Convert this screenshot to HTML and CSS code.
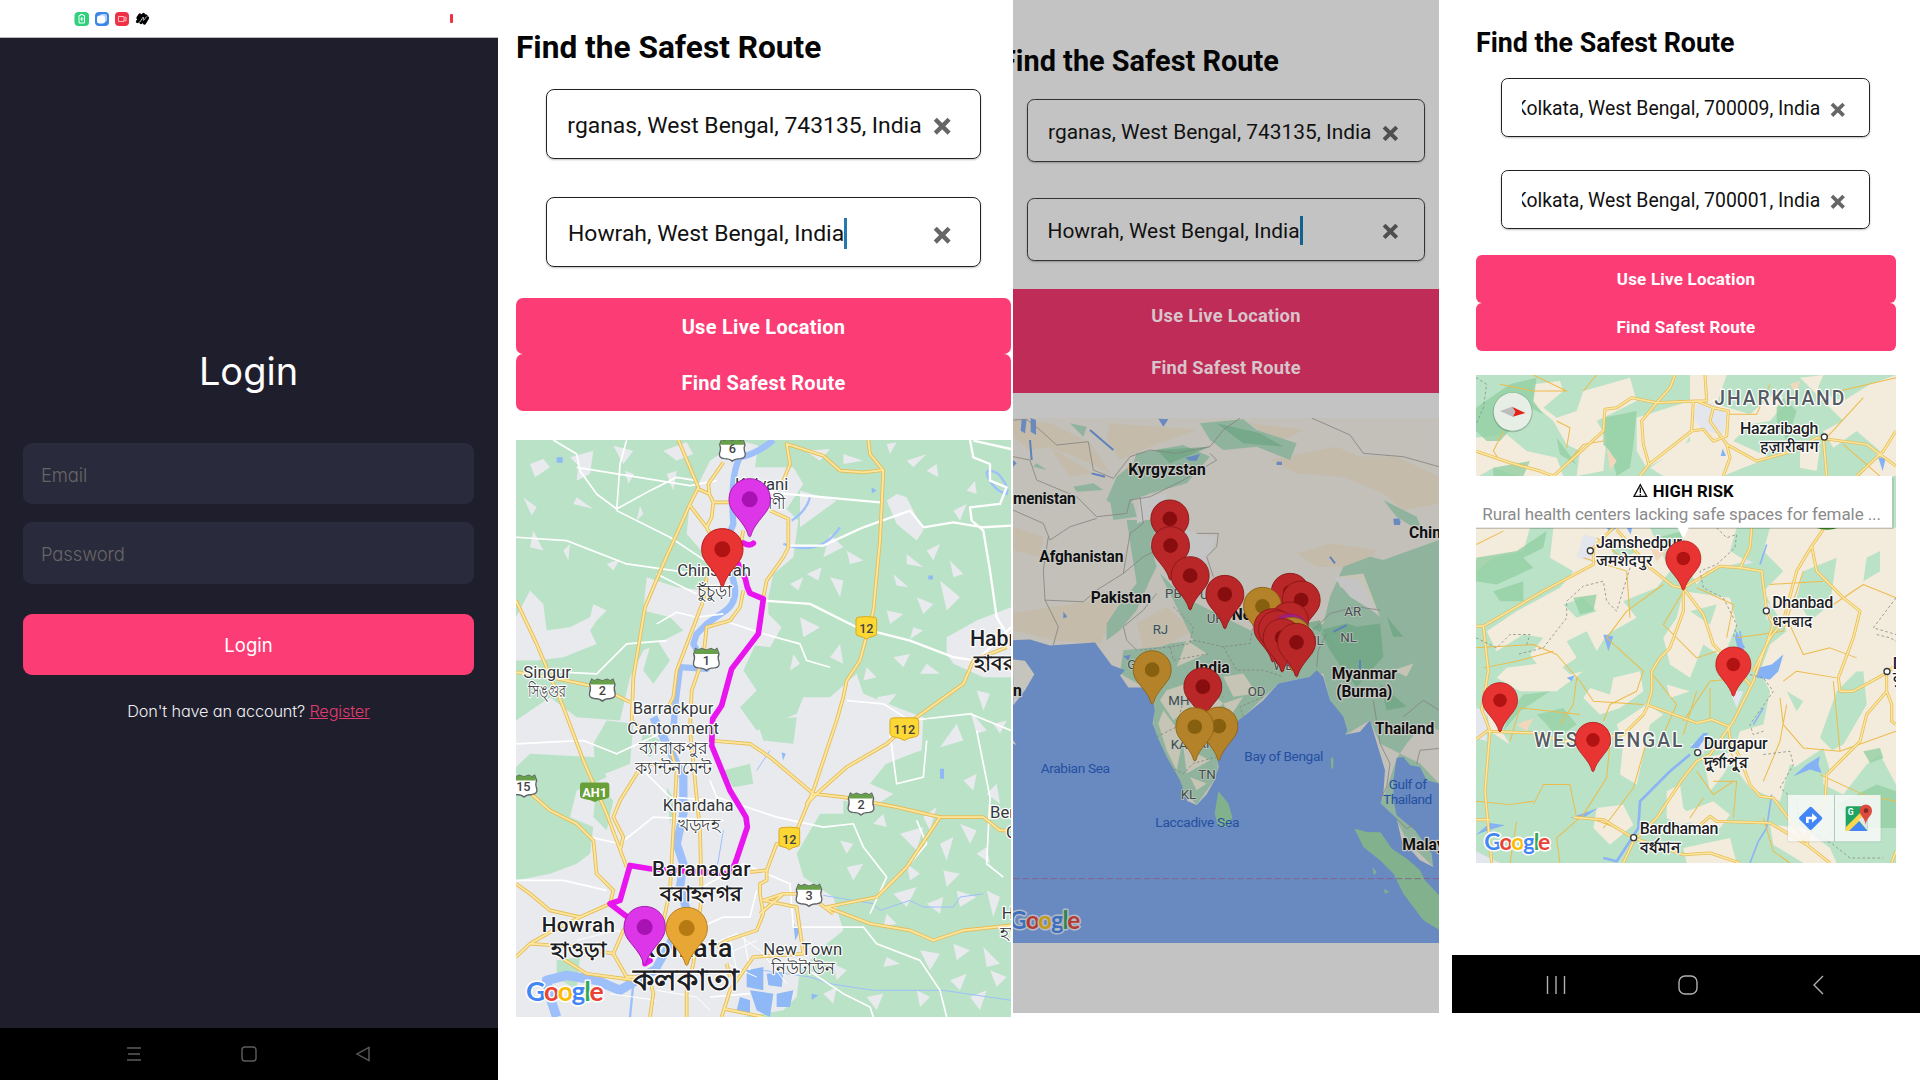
FILE: index.html
```html
<!DOCTYPE html>
<html lang="en">
<head>
<meta charset="utf-8">
<title>Safest Route</title>
<link rel="stylesheet" href="styles.css">
</head>
<body>
<svg class="defs" width="0" height="0" aria-hidden="true">
  <symbol id="pin" viewBox="-66 -66 132 182" overflow="visible">
    <path class="pin-body" d="M0-62C-35-62-62-35-62 0C-62 24-51 36-35 56C-18 77-8 92-4 109Q0 116 4 109C8 92 18 77 35 56C51 36 62 24 62 0C62-35 35-62 0-62Z"/>
    <circle class="pin-dot" r="24"/>
  </symbol>
  <symbol id="clear" viewBox="0 0 16 16"><path d="M2 2L14 14M14 2L2 14" stroke="currentColor" stroke-width="3.800" fill="none"/></symbol>
  <symbol id="shield" viewBox="-42 -36 84 72" overflow="visible">
    <path d="M-32-32L-24-27L-14-32L0-27L14-32L24-27L32-32L38-16Q33-5 38 8Q42 24 24 26Q8 26 0 34Q-8 26-24 26Q-42 24-38 8Q-33-5-38-16Z" fill="#fff" stroke="#5f6368" stroke-width="4"/>
    <path d="M-32-32L-24-27L-14-32L0-27L14-32L24-27L32-32L36-16H-36Z" fill="#689f4b"/>
  </symbol>
  <symbol id="plate" viewBox="-42 -36 84 72" overflow="visible">
    <path d="M-24-32Q0-36 24-32Q31-32 31-24V16Q31 24 20 25Q8 27 0 34Q-8 27-20 25Q-31 24-31 16V-24Q-31-32-24-32Z" fill="#fdd835" stroke="#d9a91c" stroke-width="3"/>
  </symbol>
</svg>

<main class="board">
  <section class="login">
    <header class="status">
      <svg class="status-apps" width="76" height="16" viewBox="0 0 76 16">
        <rect x="0.5" y="1" width="14.5" height="14" rx="4" fill="#2ed17c"/><path d="M5 4.500H6.500V3.500H9V4.500H10.500V12H5ZM7.800 6V10M6.200 8H9.300" fill="none" stroke="#fff"/>
        <rect x="21" y="1" width="14" height="14" rx="4" fill="#3c86ea"/><rect x="26" y="3" width="7" height="8" rx="2" fill="#b4d2fa"/><rect x="23" y="4.500" width="8" height="8" rx="2.500" fill="#fff"/>
        <rect x="41" y="1" width="14" height="14" rx="4" fill="#ef3148"/><path d="M44.500 5.500H50V10.500H44.500ZM50 7L52 6V10L50 9" fill="none" stroke="#ffb8be"/>
        <path d="M64 7L66 4M63.500 10.500L69.500 3.500M67 11.500L72 5M70.500 12L73.500 7" stroke="#000" stroke-width="3.300" stroke-linecap="round"/><path d="M66 11L69 6Q70.500 6 69 9Q69.500 10.500 72.500 5.500" fill="none" stroke="#fff" stroke-width=".7"/>
      </svg>
      <span class="battery"></span>
    </header>
    <form class="login-form">
      <h1>Login</h1>
      <div class="field">Email</div>
      <div class="field">Password</div>
      <div class="login-btn">Login</div>
      <p>Don't have an account? <a>Register</a></p>
    </form>
    <nav class="nav nav-dim">
      <svg width="16" height="16" viewBox="0 0 16 16"><path d="M1 2H15M2 8H14M1 14H15"/></svg>
      <svg width="16" height="16" viewBox="0 0 16 16"><rect x="1" y="1" width="14" height="14" rx="3"/></svg>
      <svg width="16" height="16" viewBox="0 0 16 16"><path d="M14 1.500V14.500L2 8Z"/></svg>
    </nav>
  </section>

  <section class="screen screen-route">
    <div class="content">
      <h2>Find the Safest Route</h2>
      <div class="input"><span class="value"><b>rganas, West Bengal, 743135, India</b></span><svg class="x"><use href="#clear"/></svg></div>
      <div class="input"><span class="value start"><b>Howrah, West Bengal, India</b><i class="caret"></i></span><svg class="x"><use href="#clear"/></svg></div>
      <div class="btn">Use Live Location</div>
      <div class="btn">Find Safest Route</div>
      <svg class="map" viewBox="18 28 1485 1732" preserveAspectRatio="none">
        <rect x="18" y="28" width="1485" height="1732" fill="#bae2c7"/>
        <g fill="#e8eaed">
          <path d="M600 90L690 28L745 45L735 110L850 110L880 160L830 235L865 270L850 380L790 430L775 500L775 550L815 590L780 650L735 645L700 720L740 780L690 830L740 900L860 850L880 800L960 800L1040 730L1060 790L1160 830L1240 860L1235 960L1140 985L1080 1060L1150 1090L1090 1130L1000 1110L1000 1150L930 1150L860 1270L880 1340L970 1400L1000 1500L950 1540L900 1590L870 1620L860 1700L820 1740L700 1760H18V1350L120 1330L200 1300L240 1270L250 1190L180 1160L200 1080L290 1040L260 980L60 970L18 1010V870L120 800L200 860L330 870L360 740L400 660L520 600L480 560L400 540L410 440L500 470L590 480L600 390L530 310L540 210Z"/>
          <path d="M1310 620L1400 570L1503 530V740L1420 740L1330 700L1310 670Z"/>
          <path d="M18 560L60 480L100 520L110 600L180 590L280 540L240 600L260 640L160 680L80 690L18 690ZM60 100L100 85L120 110L75 140ZM180 80L250 60L240 130L200 150L205 105ZM310 45L370 60L340 100ZM460 60L530 35L550 70L500 90ZM250 520L290 540L230 600ZM1130 210L1160 190L1190 200L1240 300L1220 330L1160 280ZM870 180L980 210L870 290ZM960 310L1000 350L940 380ZM840 880L960 800L1000 900L950 930ZM1030 970L1170 900L1230 960L1130 1000ZM1380 840L1430 900L1400 910ZM1290 950L1340 880L1360 930Z"/>
          <path d="M40 200L80 230L65 255ZM200 200L250 235L190 220ZM70 300L100 360L60 350ZM160 360L180 340L175 390ZM290 400L330 385L310 420ZM380 270L390 225L400 250ZM345 120L372 130L355 160ZM470 130L500 120L490 180ZM885 60L960 55L930 90ZM1000 70L1060 90L1000 100ZM1130 40L1160 35L1140 70ZM1190 90L1250 70L1210 110ZM1250 120L1280 100L1285 140ZM1330 240L1370 220L1350 270ZM1370 180L1395 150L1400 190ZM1250 360L1290 340L1270 390ZM1190 370L1240 410L1190 400ZM1150 430L1195 470L1160 465ZM1320 390L1360 430L1330 440ZM890 430L935 410L925 450ZM960 440L1000 450L990 500ZM840 460L880 440L865 480ZM1010 360L1060 390L1020 400ZM870 560L930 590L880 620ZM960 680L990 640L1000 700ZM850 670L870 700L840 720ZM1130 540L1180 550L1140 580ZM1220 500L1270 520L1240 550ZM1290 450L1350 500L1310 540ZM1210 590L1240 600L1200 625ZM1150 680L1200 670L1180 710ZM1250 700L1290 730L1230 730ZM1070 710L1100 740L1060 750ZM1400 780L1440 790L1420 840ZM1450 880L1490 870L1470 910ZM1100 800L1160 790L1120 840Z"/>
          <path d="M1170 1210L1240 1190L1220 1260ZM1290 1240L1330 1220L1310 1290ZM1350 1180L1400 1200L1380 1240ZM1400 1270L1430 1250L1440 1300ZM1300 1320L1350 1330L1310 1370ZM1190 1300L1230 1330L1200 1350ZM990 1230L1030 1240L1010 1270ZM1010 1310L1060 1300L1030 1350ZM1150 1390L1220 1370L1190 1430ZM1250 1420L1300 1400L1290 1450ZM1340 1380L1400 1400L1350 1430ZM1430 1380L1470 1400L1450 1460ZM1130 1450L1160 1480L1120 1490ZM1230 1560L1290 1570L1260 1620ZM1330 1540L1380 1560L1340 1590ZM1420 1550L1470 1600L1430 1610ZM1130 1580L1170 1600L1120 1610ZM1320 1650L1370 1630L1350 1680ZM1220 1680L1260 1700L1230 1730ZM1380 1700L1430 1680L1410 1740ZM1440 1620L1490 1640L1460 1670ZM1070 1700L1120 1690L1100 1740ZM970 1600L1010 1620L980 1650ZM940 1690L980 1670L970 1720ZM1240 1160L1280 1130L1260 1200ZM1090 1180L1120 1150L1130 1190ZM1360 1050L1400 1030L1390 1080ZM1430 1090L1460 1060L1470 1120Z"/>
        </g>
        <g fill="#bae2c7"><path d="M290 870L370 880L360 1000L260 1040L250 940ZM400 900L450 930L420 980L390 960ZM430 610L480 690L430 760L400 720ZM18 1180L110 1200L110 1320L30 1340ZM260 1060L310 1110L290 1200L250 1160ZM740 870L860 860L850 940L760 930ZM640 1020L720 1000L730 1060L670 1070ZM470 1070L500 1120L480 1180ZM140 1590L210 1580L200 1680L140 1640Z"/></g>
        <g fill="none" stroke="#9dc0fa" stroke-linejoin="round">
          <path d="M790 28Q740 70 690 80Q660 130 670 280Q640 340 675 470Q680 520 640 545L590 580L560 610L550 640L590 715L510 710L495 830L490 900" stroke-width="19"/>
          <path d="M430 860L470 940L520 1040L520 1150L500 1240L520 1300L510 1370L530 1440L480 1540L440 1610" stroke-width="25"/>
          <path d="M140 1760L120 1700L110 1650L170 1635L260 1650L330 1680L380 1650L450 1610" stroke-width="28"/>
          <path d="M370 1660L360 1760M845 270Q890 240 900 200M820 340Q930 380 990 290M1430 130Q1430 110 1465 130Q1500 170 1490 190Q1450 180 1430 130" stroke-width="7"/>
          <path d="M940 1395L1090 1420L1110 1440L1200 1410L1240 1430L1330 1430L1350 1400L1420 1390M760 1620L900 1640L960 1660L1090 1680L1300 1680L1503 1710M640 1200L620 1320M740 1020L780 960" stroke-width="3"/>
        </g>
        <path d="M710 1620L760 1610L760 1680L710 1670ZM770 1630L820 1625L815 1670L775 1665ZM720 1680L790 1690L780 1760L740 1740ZM800 1690L850 1680L840 1730L800 1730ZM690 1700L720 1710L720 1750L680 1740ZM140 80h18v16h-18zM1290 1015h12v30h-12zM850 1480l20 20-14 30zM1085 170l15 10-15 8zM1255 435h14v12h-14zM815 965l12 5-8 20zM905 1690l20 5-20 14z" fill="#8fb8f6"/>
        <g fill="none" stroke="#fff" stroke-width="5" stroke-linejoin="round">
          <path d="M130 28L200 70L210 120L260 190L320 235L420 180L500 140L560 150M200 110L540 165L620 150M320 240L330 100L350 28M18 320L170 330L350 400L560 430L640 400M320 240L480 320L600 400M440 430L560 490"/>
          <path d="M760 510L900 520L1040 590L1200 630L1330 680L1400 690L1503 590M840 345L940 345L1060 290L1200 240L1240 290L1330 275L1420 290L1503 285M780 185L1110 215M1380 28L1390 80L1440 100L1440 150L1490 170L1470 220L1380 230L1385 270L1420 300L1440 420L1460 560L1490 610M1503 55L1390 30" stroke-width="7"/>
          <path d="M18 940L120 935L220 930L320 970L470 900M640 570L760 610L870 640L890 690L960 710M440 580L500 545L560 560L640 550M60 720L260 730L350 640L470 630M1010 810L1120 820L1200 870L1380 850L1503 900M600 1050L620 1100L800 1160L940 1190L1030 1180L1060 1250L1130 1340L1080 1450M1140 910L1160 1060L1240 1040L1250 930M1220 1170L1250 1240L1200 1300M240 1220L330 1240L430 1160L640 1170M560 1380L700 1300L840 1360L850 1490L1060 1490L1100 1540L1230 1590L1290 1680L1310 1760M850 1590L1000 1690L1080 1730L1090 1760M18 1350L160 1350L290 1380M400 1020L480 1100L620 1110M550 1500L640 1460L720 1460L740 1380M600 1700L720 1690M1400 900L1440 1100L1430 1300L1480 1340"/>
          <path d="M610 1540L680 1510L750 1560L830 1660M630 1580L740 1530M650 1600L740 1640M660 1520L680 1620M700 1510L720 1620M440 1680L560 1700L600 1740M300 1690L440 1710M200 1530L320 1500L400 1530" stroke-width="3"/>
        </g>
        <g class="casing"><g id="roads-kolkata" fill="none" stroke-linejoin="round">
          <path d="M505 28L565 170L540 220L460 400L405 530L370 740L365 870L400 900M465 1000L400 1000L380 1030L330 1110L310 1160L340 1220L330 1260"/>
          <path d="M640 95L595 160L598 190L565 175M598 190L610 215L670 215M610 215L605 260L590 290L540 225M590 290L600 310"/>
          <path d="M820 150L840 100L830 40L940 75L990 120L1060 125L1120 118L1110 330L1090 540L1050 690L1010 750L1000 800L980 870L910 1080L840 1250L800 1240L770 1320L770 1350L750 1360L750 1390L760 1450L740 1500L650 1530L620 1550"/>
          <path d="M1075 28L1080 70L1120 120M780 240L835 265L835 350L820 380L770 450L760 500M700 480L690 530L660 570L590 590L580 680L545 780L540 900L570 1200L575 1400L550 1600L530 1680L530 1760"/>
          <path d="M580 510L550 590L500 720L490 800L470 840M590 440L580 510M700 300L680 400"/>
          <path d="M18 510L80 640L160 830L220 990L290 1150L350 1310M18 725L120 740L240 765L290 780L360 815"/>
          <path d="M1490 650L1390 690L1360 760L1220 860L1130 940L1010 1010L920 1090L890 1120L910 1090L780 980L720 940L600 930"/>
          <path d="M910 1090L1000 1100L1160 1130L1290 1160L1420 1160L1470 1200L1503 1200M1290 1160L1190 1310L1140 1360L1100 1400L950 1430L1080 1480L1200 1500L1270 1530L1360 1500L1503 1485M930 1420L970 1450"/>
          <path d="M18 1050L120 1140L200 1180L250 1230L260 1330L310 1380L300 1420L210 1460L120 1440L60 1390L18 1360M210 1460L130 1500L60 1540L18 1580M60 1540L200 1550L310 1570L350 1640L400 1640M310 1570L340 1500L370 1470"/>
          <path d="M450 1520L480 1380L490 1200L500 1020L480 950M420 1650L430 1690L420 1760M150 1580L230 1630L380 1650M650 1600L660 1640M635 1760L660 1680L730 1580L880 1570L860 1430L760 1410L820 1390L860 1390M720 1325L770 1320M750 1450L820 1390M640 1735L760 1760"/>
        </g></g>
        <use href="#roads-kolkata" class="core"/>
        <path d="M700 337Q720 348 730 338M685 400L706 445L712 470L720 488L760 505L745 610L665 715L635 825L608 865L605 945L660 1080L708 1160L712 1190L675 1300L655 1330L420 1315L360 1305L330 1410L300 1420L405 1500L405 1600L420 1590" fill="none" stroke="#e815ee" stroke-width="17" stroke-linejoin="round" stroke-linecap="round"/>
        <g class="lbl" font-size="50">
          <text x="675" y="177" textLength="160">Kalyani</text><text x="690" y="235" textLength="138" lengthAdjust="spacingAndGlyphs">কল্যাণী</text>
          <text x="502" y="436" textLength="221">Chinsurah</text><text x="560" y="498" textLength="106" lengthAdjust="spacingAndGlyphs">চুঁচুড়া</text>
          <text x="40" y="741" textLength="143">Singur</text><text x="53" y="798" textLength="115" lengthAdjust="spacingAndGlyphs">সিঙ্গুর</text>
          <text x="368" y="852" textLength="242">Barrackpur</text><text x="352" y="912" textLength="275">Cantonment</text>
          <text x="386" y="971" textLength="207" lengthAdjust="spacingAndGlyphs">ব্যারাকপুর</text><text x="375" y="1031" textLength="230" lengthAdjust="spacingAndGlyphs">ক্যান্টনমেন্ট</text>
          <text x="458" y="1142" textLength="213">Khardaha</text><text x="503" y="1201" textLength="127" lengthAdjust="spacingAndGlyphs">খড়দহ</text>
          <text x="760" y="1573" textLength="237">New Town</text><text x="783" y="1632" textLength="190" lengthAdjust="spacingAndGlyphs">নিউটাউন</text>
          <text x="1440" y="1163">Berachampa</text><text x="1488" y="1224">Channel</text><text x="1475" y="1467">Haroa</text><text x="1470" y="1526">হাড়োয়া</text>
        </g>
        <g class="lbl mid" font-size="62">
          <text x="1380" y="646" font-size="64">Habra</text><text class="bn" x="1392" y="717">হাবরা</text>
          <text x="426" y="1337" textLength="296">Baranagar</text><text class="bn" x="450" y="1411" textLength="248" lengthAdjust="spacingAndGlyphs">বরাহনগর</text>
          <text x="95" y="1506" textLength="220">Howrah</text><text class="bn" x="122" y="1580" textLength="166" lengthAdjust="spacingAndGlyphs">হাওড়া</text>
          <text x="385" y="1579" font-size="80" textLength="282">Kolkata</text><text class="bn" x="370" y="1678" font-size="86" textLength="314" lengthAdjust="spacingAndGlyphs">কলকাতা</text>
        </g>
        <g class="shields" font-size="38">
          <use href="#shield" x="625" y="50" width="84" height="72" transform="translate(0 -28)"/><text x="667" y="68">6</text>
          <use href="#shield" x="547" y="650" width="84" height="72"/><text x="589" y="702">1</text>
          <use href="#shield" x="235" y="742" width="84" height="72"/><text x="277" y="793">2</text>
          <use href="#shield" x="0" y="1030" width="84" height="72"/><text x="40" y="1082">15</text>
          <use href="#shield" x="1011" y="1084" width="84" height="72"/><text x="1053" y="1136">2</text>
          <use href="#shield" x="855" y="1358" width="84" height="72"/><text x="897" y="1410">3</text>
          <use href="#plate" x="1027" y="556" width="84" height="72"/><text x="1069" y="608">12</text>
          <use href="#plate" x="796" y="1188" width="84" height="72"/><text x="838" y="1240">12</text>
          <path d="M1150 862H1216Q1226 862 1226 872V908Q1226 918 1210 920Q1195 922 1183 930Q1170 922 1156 920Q1140 918 1140 908V872Q1140 862 1150 862Z" fill="#fdd835" stroke="#d9a91c" stroke-width="3"/><text x="1183" y="910">112</text>
          <path d="M216 1056H292Q298 1056 298 1064V1096Q298 1104 282 1106Q266 1108 254 1115Q242 1108 226 1106Q210 1104 210 1096V1064Q210 1056 216 1056Z" fill="#689f38"/><text x="254" y="1100" class="ah">AH1</text>
        </g>
        <g class="violet"><use href="#pin" x="653" y="140" width="132" height="182"/><use href="#pin" x="338" y="1424" width="132" height="182"/></g>
        <g class="red"><use href="#pin" x="571" y="290" width="132" height="182"/></g>
        <g class="amber"><use href="#pin" x="464" y="1427" width="132" height="182"/></g>
        <text class="google" x="48" y="1712" font-size="80" textLength="233"><tspan fill="#4285f4">G</tspan><tspan fill="#ea4335">o</tspan><tspan fill="#fbbc05">o</tspan><tspan fill="#4285f4">g</tspan><tspan fill="#34a853">l</tspan><tspan fill="#ea4335">e</tspan></text>
      </svg>
    </div>
  </section>

  <section class="screen screen-india">
    <div class="content">
      <h2>Find the Safest Route</h2>
      <div class="input"><span class="value"><b>rganas, West Bengal, 743135, India</b></span><svg class="x"><use href="#clear"/></svg></div>
      <div class="input"><span class="value start"><b>Howrah, West Bengal, India</b><i class="caret"></i></span><svg class="x"><use href="#clear"/></svg></div>
      <div class="btn">Use Live Location</div>
      <div class="btn">Find Safest Route</div>
    </div>
    <svg class="map" viewBox="9 24 1278 1574" preserveAspectRatio="none">
      <rect x="9" y="24" width="1278" height="1574" fill="#c2c0b8"/>
      <g fill="#c4b8a5"><path d="M9 30L120 40L240 100L300 190L240 160L120 110L60 120L9 80ZM300 40L560 60L420 110L330 150L290 90ZM780 150L980 110L1050 140L1160 140L1287 200V280L1180 300L1120 250L1000 200L860 190ZM120 110L250 190L180 200ZM9 350L100 380L90 440L9 420ZM130 590L330 560L300 640L270 700L130 690L9 660V610ZM380 640L470 590L550 660L480 700L400 720ZM860 430L960 400L1100 420L1060 470L920 470ZM720 40L880 60L800 100Z" opacity=".65"/></g>
      <g fill="#8fb39c">
        <path d="M570 40L700 28L740 60L860 100L840 150L740 110L640 120L600 90ZM380 130L520 105L600 140L530 220L420 250L370 270L340 310L290 270L320 200L370 160ZM300 270L370 280L380 320L310 330ZM350 330L450 330L420 400L440 470L420 510L380 600L330 660L290 690L290 640L330 580L380 520Z"/>
        <path d="M450 490L520 560L640 620L720 660L800 690L880 660L940 640L960 560L1000 470L1080 440L1120 450L1287 390V960L1240 940L1190 1000L1160 1045L1125 1150L1110 1180L1160 1230L1190 1290L1270 1370L1287 1370V1480H1287V1120L1230 1060L1110 1000L1080 930L1005 975L960 870L940 790L900 800L805 820L700 920L630 990L620 1100L560 1183L510 1130L430 960V900L400 830L330 790L340 720L450 710L480 700L550 690Z"/>
        <path d="M1120 270L1220 320L1240 370L1160 320ZM180 40L230 50L220 80ZM190 230L250 220L280 240L200 245ZM80 160L110 180L70 170Z"/>
      </g>
      <g fill="#6ea583" opacity=".75"><path d="M1040 650L1110 640L1120 740L1040 830L1000 780L960 720L930 660L1010 640ZM1130 620L1180 680L1150 680ZM930 630L880 640L940 670ZM440 120L600 110L480 160ZM620 40L750 70L820 110L700 100ZM1110 820L1190 890L1130 900Z"/></g>
      <g fill="#c5c4b5"><path d="M470 840L560 810L640 880L600 920L540 890L490 930L450 870ZM460 900L520 980L500 1080L470 1020L445 940ZM520 1010L600 1050L530 1090ZM530 690L590 730L500 770ZM640 800L700 790L740 850L670 860ZM640 880L700 860L660 920ZM980 500L1060 490L1110 620L1040 560L990 530ZM1150 780L1210 760L1190 800ZM540 1100L590 1120L560 1140Z"/></g>
      <path d="M390 260L470 250L460 310L380 340ZM470 350L620 380L580 480L520 430ZM970 500L1050 510L1100 610L1020 560Z" fill="#c4c4c4"/>
      <g fill="#6989c1">
        <path d="M9 690L60 688L120 706L165 703L255 697L275 725L305 765L345 780L330 795L355 832L405 832L425 850L434 900L428 940L442 980L470 1040L510 1110L532 1172L560 1184L590 1152L614 1110L626 1070L620 1030L645 960L700 920L760 870L805 820L900 800L920 780L940 800L960 870L1000 920L1012 960L1005 974L1050 965L1080 930L1098 990L1125 1080L1120 1150L1112 1180L1160 1225L1175 1290L1230 1350L1270 1370L1265 1330L1215 1260L1160 1215L1150 1170L1150 1110L1160 1043L1180 1040L1200 1065L1230 1070L1250 1110L1287 1120V1598H9ZM35 28L50 28L45 70L32 62ZM62 24L78 30V75L62 65ZM445 26L475 28L460 50ZM525 143L570 132L560 152L540 152ZM800 155h16v10h-16zM1150 325L1172 333L1170 345H1152ZM340 738L362 734L355 752ZM1155 325h14v15h-14zM160 605L172 620L160 625ZM9 150L20 160L9 170Z"/>
      </g>
      <path d="M9 748L45 752L73 792L45 840L10 885ZM9 1000L20 1005L9 990Z" fill="#c5c4bd"/>
      <g fill="#82b18d"><path d="M625 1142L655 1180L667 1220L655 1250L625 1250L614 1210ZM1033 1255L1070 1265L1112 1266L1145 1315L1190 1345L1230 1380L1245 1410L1287 1455V1558L1240 1530L1180 1450L1150 1390L1110 1350L1060 1310ZM962 1045L970 1040V1075H964ZM1087 1370L1100 1385L1092 1395ZM1122 1435L1138 1445L1125 1450Z"/></g>
      <path d="M240 60L310 120M60 90L65 150M245 190L285 200M960 440L975 460M1050 750V780M970 665L1010 645" stroke="#5e80bd" stroke-width="6" fill="none"/>
      <g fill="none" stroke="#86847f" stroke-width="2.500" stroke-linejoin="round">
        <path d="M9 30L50 28L90 60L140 105L235 95L250 180L310 205L360 140L420 120L500 130L600 110L640 60L690 24M9 140L60 150L80 210L200 260L260 320L350 310L360 270L420 260L520 210L620 150L600 130M905 24L1020 75L1060 130L1180 140L1287 170M9 300L100 340L120 390L180 350L260 325M390 260L400 340L360 370L350 430L340 490L260 540L220 575L105 570L100 480L115 380M105 570L145 650L130 705M340 490L400 440L440 420M560 370L625 370L620 410L590 440L610 500M380 720L350 690L340 650L400 600L440 550M910 660L960 610L1040 590L1110 600M920 770L925 720L950 670M1090 870L1110 1000L1140 1060L1130 1130L1110 1170M1180 920L1240 870L1287 900M1220 1060L1230 1020L1287 1015M1160 1225L1190 1255L1215 1240"/>
        <path d="M490 590L550 650L540 700L480 710L390 720M550 690L640 710L720 700L730 640M480 710L490 750L600 730M640 710L680 780L760 780L820 800M440 980L500 950L520 870L640 860M480 1070L520 1090L550 1060L620 1040M700 920L690 890L760 860" stroke-dasharray="8 6"/>
        <path d="M9 1405H1287" stroke="#855e85" stroke-dasharray="20 8"/>
      </g>
      <g class="lbl dark" font-size="47">
        <text x="355" y="196" textLength="232">Kyrgyzstan</text><text x="9" y="283" textLength="188">menistan</text><text x="88" y="455" textLength="253">Afghanistan</text>
        <text x="242" y="578" textLength="181">Pakistan</text><text x="1197" y="385">China</text><text x="665" y="630">Nepal</text><text x="555" y="789" textLength="104">India</text>
        <text x="965" y="806" textLength="196">Myanmar</text><text x="979" y="861" textLength="168">(Burma)</text><text x="1095" y="972" textLength="178">Thailand</text><text x="1177" y="1318">Malaysia</text><text x="9" y="858">n</text>
      </g>
      <g class="lbl state" font-size="40"><text x="465" y="564">PB</text><text x="570" y="568">UK</text><text x="590" y="639">UP</text><text x="428" y="671">RJ</text><text x="352" y="777">GJ</text><text x="475" y="884">MH</text><text x="713" y="857">OD</text><text x="790" y="781">WB</text><text x="885" y="706">ML</text><text x="991" y="696">NL</text><text x="1003" y="619">AR</text><text x="482" y="1017">KA</text><text x="562" y="1012">AP</text><text x="565" y="1106">TN</text><text x="512" y="1165">KL</text></g>
      <g class="sea" font-size="41"><text x="92" y="1089" textLength="208">Arabian Sea</text><text x="703" y="1053" textLength="237">Bay of Bengal</text><text x="436" y="1251" textLength="252">Laccadive Sea</text><text x="1136" y="1136" textLength="115">Gulf of</text><text x="1119" y="1181" textLength="148">Thailand</text></g>
      <g class="red shade">
        <use href="#pin" x="419" y="266" width="121" height="167"/><use href="#pin" x="421" y="346" width="121" height="167"/><use href="#pin" x="480" y="436" width="121" height="167"/><use href="#pin" x="584" y="492" width="121" height="167"/>
        <use href="#pin" x="780" y="486" width="121" height="167"/><use href="#pin" x="813" y="509" width="121" height="167"/>
      </g>
      <g class="amber shade"><use href="#pin" x="697" y="528" width="121" height="167"/></g>
      <g class="red shade"><use href="#pin" x="778" y="572" width="121" height="167"/><use href="#pin" x="728" y="592" width="121" height="167"/><use href="#pin" x="742" y="598" width="121" height="167"/></g>
      <g class="violet shade"><use href="#pin" x="780" y="608" width="121" height="167"/></g>
      <g class="amber shade"><use href="#pin" x="786" y="618" width="121" height="167"/></g>
      <g class="red shade"><use href="#pin" x="756" y="622" width="121" height="167"/><use href="#pin" x="799" y="636" width="121" height="167"/></g>
      <g class="amber shade"><use href="#pin" x="366" y="718" width="121" height="167"/></g>
      <g class="red shade"><use href="#pin" x="518" y="769" width="121" height="167"/></g>
      <g class="amber shade"><use href="#pin" x="566" y="887" width="121" height="167"/><use href="#pin" x="494" y="889" width="121" height="167"/></g>
      <text class="google google-dim" x="-2" y="1555" font-size="73" textLength="213"><tspan fill="#3c6fc0">G</tspan><tspan fill="#b63a31">o</tspan><tspan fill="#c49a16">o</tspan><tspan fill="#3c6fc0">g</tspan><tspan fill="#2f8648">l</tspan><tspan fill="#b63a31">e</tspan></text>
    </svg>
  </section>

  <section class="screen screen-risk">
    <div class="content">
      <h2>Find the Safest Route</h2>
      <div class="input"><span class="value"><b>Kolkata, West Bengal, 700009, India</b></span><svg class="x"><use href="#clear"/></svg></div>
      <div class="input"><span class="value"><b>Kolkata, West Bengal, 700001, India</b></span><svg class="x"><use href="#clear"/></svg></div>
      <div class="btn">Use Live Location</div>
      <div class="btn">Find Safest Route</div>
      <svg class="map" viewBox="78 12 1260 1463" preserveAspectRatio="none">
        <rect x="78" y="12" width="1260" height="1463" fill="#bae2c7"/>
        <g fill="#f3ebdc">
          <path d="M78 200L170 190L230 240L320 260L340 315H200L130 290L78 320ZM250 40L330 30L340 60L280 110L320 140L380 120L400 60L540 20L560 90L500 120L440 150L470 200L460 300L380 315L390 240L350 220L310 150L250 100ZM560 140L720 90L740 160L700 230L590 290L560 240ZM720 12L830 12L800 100L900 130L980 60L1010 90L960 150L900 160L850 210L960 260L880 290L820 315H640L600 290L720 210ZM1050 20L1120 12L1100 60L1180 90L1260 40L1338 12V315H1230L1290 240L1220 180L1150 230L1120 180L1180 150ZM1050 220L1110 230L1100 300L1050 290Z"/>
          <path d="M78 470L240 470L220 540L130 560L78 600ZM310 470L600 470L660 600L620 650L520 690L560 740L470 790L440 840L410 780L350 810L380 860L290 920L240 850L280 800L220 790L140 840L110 780L200 720L330 650L370 600L300 560ZM700 470L860 470L840 540L890 570L770 600L740 640L700 560ZM700 660L840 680L860 760L820 860L760 820L720 920L660 880L640 800L680 740ZM960 470H1338V860L1300 900L1220 900L1160 960L1110 1100L1150 1140L1060 1200L1020 1180L990 1290L900 1250L840 1170L870 1080L940 1060L960 960L930 900L960 820L1010 780L940 660L1000 600L940 540Z"/>
          <path d="M1150 640L1338 600V1240L1290 1150L1250 1180L1180 1270L1120 1240L1120 1150L1180 1120L1250 1000L1240 900L1180 900L1170 840L1220 780ZM420 950L480 970L490 920L570 900L580 960L510 1010L450 1030L400 980ZM500 1060L590 1000L640 1030L600 1060L560 1240L510 1210L520 1110ZM170 890L320 870L360 910L400 900L320 960L210 960L140 920ZM100 950L160 970L130 1040L180 1120L120 1080ZM650 940L720 960L660 980ZM650 1260L690 1240L700 1310L740 1350L690 1360L650 1340ZM710 1320L790 1290L840 1330L810 1370L730 1370ZM440 1310L520 1300L550 1360L480 1420L430 1370ZM700 1430L840 1400L860 1475H710ZM960 1360L1060 1370L1140 1430L1160 1475H1060L970 1420ZM760 1160L860 1140L820 1210L780 1260Z"/>
        </g>
        <g fill="#bae2c7"><path d="M1060 600L1160 560L1140 700L1080 750L1040 680ZM1250 560L1290 540L1290 600L1240 630ZM1010 960L1060 990L1040 1020ZM1030 1190L1120 1130L1140 1200L1070 1250ZM340 700L400 680L440 720L380 740ZM720 720L800 700L780 760ZM480 520L560 540L500 580Z"/></g>
        <g fill="#93d0a3">
          <path d="M78 110L180 40L260 20L250 90L280 130L240 110L150 210L110 210L78 180ZM460 140L560 120L550 220L540 290L500 315L480 240L460 220ZM130 290L240 270L220 315H130ZM320 200L380 280L330 250ZM980 110L1000 80L1040 120L1010 210L980 150ZM78 560L200 540L290 480L280 530L220 560L250 590L140 640L78 630ZM130 660L220 630L220 690L150 690ZM370 680L440 670L430 720L390 730ZM1160 1300L1280 1240L1338 1260V1370H1220ZM1240 1140L1290 1130L1300 1160L1260 1175ZM620 500L700 480V540Z" opacity=".8"/>
          <path d="M180 1020L220 970L300 960L210 1020L160 1080ZM260 1030L340 1010L380 1060L320 1100L290 1060Z" opacity=".7"/>
        </g>
        <path d="M470 230L500 270L480 300ZM1020 40L1050 30L1040 70ZM600 530L650 540L620 570ZM200 1060L250 1040L230 1080Z" fill="#f1d8bc"/>
        <path d="M740 100L790 95L830 130L820 190L760 180L730 140ZM400 490L440 500L420 570L380 560ZM78 1010L110 1020V1110L78 1100ZM840 960L880 960L860 1010ZM720 1120L770 1110L760 1150ZM880 560L910 575L880 580ZM940 690L970 700L950 750ZM78 1440L150 1475H78Z" fill="#e3e6ec"/>
        <g fill="#85b1f5"><path d="M818 232L828 255L812 255ZM1285 260L1308 258L1298 300ZM470 470L500 470L480 485ZM530 470H546L542 490ZM860 780L885 830L865 840L855 800ZM925 890L965 880L1000 850L985 900L960 925L920 920ZM460 790L490 795L475 840ZM350 920L375 912L365 930ZM720 1130L760 1085L775 1085L745 1130ZM1030 1215L1070 1180L1110 1155L1105 1180L1115 1205L1080 1195ZM78 1390L120 1355L165 1362L120 1375ZM360 1340L445 1310L400 1340Z"/></g>
        <path d="M720 1150L660 1200L570 1290L565 1370L520 1440L500 1470L460 1460" fill="none" stroke="#8cb4f5" stroke-width="8"/>
        <path d="M870 780L880 850M965 1270L950 1370L925 1410L900 1475M940 1010L910 1060M950 520L930 580" fill="none" stroke="#8cb4f5" stroke-width="5"/>
        <g fill="none" stroke="#edbb48" stroke-width="3" stroke-linejoin="round">
          <path d="M250 12L350 60L250 60L150 40M160 180L130 240L150 270M320 150L360 170L350 230M330 300L400 220L460 210M400 60L440 12M680 90L740 90M835 130L920 130L960 40M1130 200L1240 80M1170 60L1338 20M1180 220L1290 315M78 520L160 480M400 560L530 600L540 740M530 570L440 500M640 640L530 720L470 800L580 900L560 960L480 1000L460 1050M700 660L640 760L740 860L800 840M740 650L850 700L830 800M860 800L1000 780L1060 600M960 640L1120 630M1150 700L1240 640L1338 680M1010 740L1060 850L1140 830L1220 860M78 830L250 820L320 850L390 930L430 990L580 1000M100 890L200 870L310 840M380 920L370 1000L330 1060M180 1110L210 1010L390 1030M600 900L680 1000L640 1090M700 1050L780 930L870 920M740 960L700 1090M780 1040L780 950M480 1110L470 1220L400 1330L320 1400L330 1475M250 1300L280 1240L360 1240L380 1340M78 1290L180 1300L250 1290M590 1110L550 1250L460 1370M740 1200L790 1270L850 1230M760 1280L720 1340M850 1340L860 1230L790 1230M1000 930L1040 900L1160 920M990 980L1000 1060L1060 1130L1170 1140L1338 1080M1010 1000L990 1110L940 1230M1150 930L1170 1140M1110 1210L1240 1270L1338 1290M870 1130L840 1140L870 1200M940 1340L970 1440L1020 1475M500 1370L420 1340M200 1350L180 1475"/>
        </g>
        <g class="casing thin"><g id="roads-bengal" fill="none" stroke-linejoin="round">
          <path d="M78 240L180 275L270 300L310 315L460 180L465 115L500 110L545 80L620 95L740 90L770 90L765 12M675 12L660 50L620 95L575 150L580 220L597 280L570 315M597 280L725 180L730 90M725 180L760 175L790 210L830 195L835 120L790 110M740 90L790 110L780 150L830 220L920 270L1030 240L1100 200L1250 220L1338 285M1120 200L1130 315M830 220L840 260L820 315M1338 180L1300 240L1220 315"/>
          <path d="M490 470L430 530L430 580L280 660L100 765L78 765M100 765L115 900L95 1015L120 1080L105 1260L125 1475M78 1105L110 1080L250 1085L340 1110M500 475L600 590L670 645L700 650L810 585L870 590L900 530L905 470M700 650L700 720L660 830L630 860L605 900L605 960L590 1010L580 1030L520 1090L340 1110"/>
          <path d="M700 650L760 730L790 820L830 860L900 940M910 930L850 1050L780 1150L740 1170L700 1220L620 1340L550 1410L520 1475M870 590L935 600L940 640L950 720L970 760L910 930M1120 475L1085 525L1040 600L1000 750L960 800L910 900M590 1000L740 1055L785 1045L835 1065L840 1100L870 1160L900 1240L930 1275L970 1280L1075 1420M1085 525L1100 600L1180 680L1230 720L1210 800L1165 920L1170 960L1210 960L1310 905L1310 960L1250 1030L1230 1110L1190 1150L1130 1210L1125 1290L1080 1350L1070 1420L1140 1475M1310 960L1325 1000V1050L1338 1060M78 1345H120M370 1338L460 1345L550 1400L700 1450L780 1445L870 1475M740 1370L780 1335L800 1350L960 1355L1070 1420M1338 880L1310 905M1338 1440L1325 1475"/>
        </g></g>
        <use href="#roads-bengal" class="core thin"/>
        <path d="M78 20L110 40L100 110L78 160M800 470L830 500L860 490L855 530L800 580L750 600L760 650L820 680L860 760L850 800M540 590L500 720L470 690L460 630L400 645L350 690L350 740L280 830L200 850M78 800L140 830L180 790L240 790L230 820M1338 680L1270 770L1338 790M900 910L940 920L970 960L900 1060L910 1090L940 1080M1280 790L1320 800L1338 810M940 1150L1020 1140L1030 1180L990 1250L1040 1290L1050 1360L1150 1420L1200 1460L1300 1460" fill="none" stroke="#8b8f8c" stroke-width="2.500" stroke-dasharray="8 7"/>
        <g class="lbl cap" font-size="58"><text x="793" y="101" textLength="393">JHARKHAND</text><text x="252" y="1127" textLength="448">WEST BENGAL</text></g>
        <g class="lbl town" font-size="48">
          <text x="870" y="189" textLength="235">Hazaribagh</text><text x="930" y="244" textLength="176" lengthAdjust="spacingAndGlyphs">हज़ारीबाग</text>
          <text x="438" y="531" textLength="258">Jamshedpur</text><text x="438" y="586" textLength="170" lengthAdjust="spacingAndGlyphs">जमशेदपुर</text>
          <text x="967" y="711" textLength="183">Dhanbad</text><text x="967" y="767" textLength="120" lengthAdjust="spacingAndGlyphs">धनबाद</text>
          <text x="761" y="1134" textLength="192">Durgapur</text><text class="bn" x="761" y="1190" textLength="133" lengthAdjust="spacingAndGlyphs">দুর্গাপুর</text>
          <text x="569" y="1389" textLength="236">Bardhaman</text><text class="bn" x="569" y="1445" textLength="125" lengthAdjust="spacingAndGlyphs">বর্ধমান</text>
          <text x="1328" y="892">Dumka</text><text x="1328" y="938">दुमका</text>
        </g>
        <g fill="#fff" stroke="#33373b" stroke-width="4"><circle cx="1123" cy="198" r="9"/><circle cx="421" cy="539" r="9"/><circle cx="949" cy="719" r="9"/><circle cx="743" cy="1144" r="9"/><circle cx="551" cy="1399" r="9"/><circle cx="1311" cy="901" r="9"/></g>
        <circle cx="188" cy="124" r="60" fill="#000" opacity=".18"/><circle cx="188" cy="122" r="57" fill="#e6eee6"/><path d="M226 126L186 107L196 122L188 137Z" fill="#e3231b"/><path d="M150 120L186 107L196 122L188 137Z" fill="#bdbdbd"/>
        <path d="M1098 470Q1130 482 1165 470Z" fill="#3c8a22"/>
        <rect x="70" y="319" width="1260" height="154" fill="#000" opacity=".25"/><path d="M78 315H1327V470H716L700 504L683 470H78Z" fill="#fff"/>
        <path d="M571 341L590 376H552ZM571 350V366M571 369V373" fill="none" stroke="#111" stroke-width="4"/>
        <text class="risk" x="608" y="378" font-size="50" textLength="243">HIGH RISK</text>
        <text class="note" x="97" y="448" font-size="51" textLength="1196">Rural health centers lacking safe spaces for female ...</text>
        <g class="red"><use href="#pin" x="644" y="506" width="112" height="154"/><use href="#pin" x="794" y="824" width="112" height="154"/><use href="#pin" x="94" y="931" width="112" height="154"/><use href="#pin" x="373" y="1050" width="112" height="154"/></g>
        <rect x="1012" y="1271" width="282" height="142" fill="#000" opacity=".08"/><rect x="1014" y="1271" width="138" height="139" fill="#fff" opacity=".82"/><rect x="1155" y="1271" width="137" height="139" fill="#fff" opacity=".82"/>
        <rect x="1056" y="1315" width="52" height="52" rx="5" transform="rotate(45 1082 1341)" fill="#4285f4"/><path d="M1072 1355V1340H1088" fill="none" stroke="#fff" stroke-width="8"/><path d="M1086 1326L1102 1340L1086 1354Z" fill="#fff"/>
        <rect x="1187" y="1305" width="66" height="74" rx="5" fill="#1fa463"/><path d="M1192 1379L1223 1348L1253 1379Z" fill="#4285f4"/><path d="M1187 1368L1240 1315L1250 1327L1197 1379H1187Z" fill="#fdd54f"/><path d="M1225 1346L1253 1322V1379Z" fill="#e6e6e6"/><path d="M1247 1360C1245 1338 1229 1334 1229 1318A18 18 0 0 1 1266 1318C1266 1334 1250 1338 1247 1360Z" fill="#dc4b3e"/><circle cx="1248" cy="1318" r="7" fill="#842a22"/><text x="1193" y="1331" font-size="26" fill="#fff" class="g">G</text>
        <text class="google" x="103" y="1436" font-size="69" textLength="198"><tspan fill="#4285f4">G</tspan><tspan fill="#ea4335">o</tspan><tspan fill="#fbbc05">o</tspan><tspan fill="#4285f4">g</tspan><tspan fill="#34a853">l</tspan><tspan fill="#ea4335">e</tspan></text>
      </svg>
    </div>
    <nav class="nav nav-light">
      <svg width="20" height="20" viewBox="0 0 20 20"><path d="M1.500 1V19M10 1V19M18.500 1V19"/></svg>
      <svg width="20" height="20" viewBox="0 0 20 20"><rect x="1" y="1" width="18" height="18" rx="6"/></svg>
      <svg width="20" height="20" viewBox="0 0 20 20"><path d="M14 1L5 10L14 19"/></svg>
    </nav>
  </section>
</main>
</body>
</html>
```
FILE: styles.css
```css
* { box-sizing: border-box; }
body { margin: 0; width: 1920px; height: 1080px; overflow: hidden; background: #fff; font-family: Roboto, "Noto Sans", sans-serif; }
h1, h2, p { margin: 0; }
.defs { display: block; }
.board { display: flex; align-items: flex-start; height: 1080px; }

/* login phone */
.login { width: 498px; height: 1080px; display: flex; flex-direction: column; background: #1f1e2d; font-family: Inter, Lato, sans-serif; font-feature-settings: "cv11"; }
.status { height: 38px; background: #fff; border-bottom: 1px solid #b9b9be; display: flex; align-items: center; justify-content: space-between; padding: 0 45px 0 74px; }
.battery { width: 3px; height: 9px; border-radius: 1px; background: #ef3148; }
.login-form { flex: 1; display: flex; flex-direction: column; padding: 304.500px 24px 0 23px; }
.login-form h1 { height: 64px; margin-bottom: 36px; text-align: center; font-size: 38px; line-height: 57px; font-weight: 400; color: #fff; }
.field { height: 61.500px; margin-bottom: 18px; padding-left: 18px; border-radius: 9px; background: #2a2a3d; color: #666564; font-size: 18.500px; font-weight: 300; line-height: 64px; letter-spacing: -.15px; }
.login-btn { height: 61.500px; margin-top: 12px; border-radius: 9px; background: #fc3d75; color: #fff; text-align: center; font-size: 18.500px; line-height: 63px; }
.login-form p { margin-top: 24px; text-align: center; font-size: 16.300px; font-weight: 300; line-height: 24px; letter-spacing: -.15px; color: #f0f0f2; }
.login-form a { color: #e03c6e; text-decoration: underline; }
.nav { display: flex; align-items: center; background: #000; }
.nav path, .nav rect { fill: none; stroke: currentColor; stroke-width: 1.400; }
.nav-dim { height: 52px; color: #5c5c5c; padding: 0 127px 0 126px; justify-content: space-between; }
.nav-light { width: 468px; height: 58px; color: #b0b0b0; padding: 2px 91px 0 94px; justify-content: space-between; }

/* route finder phones, sized in em so each one scales */
.screen { overflow: hidden; display: flex; flex-direction: column; }
.content { display: flex; flex-direction: column; }
.screen h2 { font-size: 1.582em; line-height: 1.190; margin-bottom: .712em; font-weight: 700; color: #050505; white-space: nowrap; }
.input { height: 3.475em; margin: 0 1.520em 1.940em 1.500em; padding: 0 1.400em 0 1.050em; border: 1.500px solid #222; border-radius: .400em; box-shadow: 0 1px 2px rgba(0,0,0,.25); display: flex; align-items: center; }
.value { flex: 1; overflow: hidden; display: flex; justify-content: flex-end; align-items: center; height: 100%; color: #111; white-space: nowrap; padding-top: .120em; }
.value b { font-size: 1.145em; font-weight: 400; flex: none; }
.value.start { justify-content: flex-start; }
.caret { width: 3px; height: 1.550em; background: #2878b0; flex: none; }
.x { width: .920em; height: .920em; margin-left: .580em; margin-top: .250em; color: #666; flex: none; }
.btn { height: 2.830em; padding-top: .060em; border-radius: .350em; background: #fc3d75; color: #fff; display: flex; align-items: center; justify-content: center; font-weight: 700; letter-spacing: .014em; }
.input + .btn { margin-top: -.400em; }
.map { display: block; overflow: hidden; margin-top: 1.440em; flex: none; }

.screen-route { width: 514px; height: 1080px; font-size: 20px; padding: 29px 0 0 18px; }
.screen-route .content, .screen-route .map { width: 495px; }
.screen-route .map { height: 577px; }
.screen-india { width: 426px; height: 1013px; margin-left: 1px; font-size: 18.260px; background: #c3c3c3; padding-top: 44px; margin-right: 13px; }
.screen-india .content { margin: 0 -13px; }
.screen-india .input { border-color: #333; margin-right: 1.460em; }
.screen-india .btn { background: #bf2c58; color: #d7c5cb; border-radius: 0; }
.screen-india .x { color: #4f4f4f; }
.screen-india .map { width: 426px; height: 525px; margin-top: 1.400em; }
.screen-india .caret { background: #14608f; }
.screen-risk { width: 468px; height: 1013px; font-size: 16.930px; padding-top: 27.500px; }
.screen-risk .content { margin: 0 24px; height: 927.500px; width: 420px; }
.screen-risk .value { margin-left: .080em; }
.screen-risk .map { width: 420px; height: 488px; margin-top: 1.400em; }

/* map artwork */
.casing { stroke: #e6bd58; stroke-width: 11; }
.core { stroke: #fde79f; stroke-width: 5.500; }
.casing.thin { stroke-width: 9; }
.core.thin { stroke-width: 4.500; }
.lbl text { paint-order: stroke; stroke: #fff; stroke-width: 7px; stroke-linejoin: round; fill: #33373b; }
.lbl.mid text, .lbl.town text { font-weight: 500; fill: #1d2023; }
.lbl.mid .bn, .lbl.town .bn { font-weight: 600; }
.lbl.dark text { font-weight: 700; fill: #111; stroke: #c9c9c6; }
.lbl.state text { fill: #454b4b; stroke: #b9c5bd; stroke-width: 5px; }
.lbl.cap text { fill: #565b62; font-weight: 500; letter-spacing: 3px; }
.sea text { fill: #2450a0; }
.shields text { fill: #444; text-anchor: middle; font-weight: 500; }
.shields .ah { fill: #fff; font-weight: 700; }
.red { --body: #e93434; --edge: #b81f1f; --dot: #b11212; }
.violet { --body: #dd35e8; --edge: #a31cae; --dot: #a812b2; }
.amber { --body: #e8a735; --edge: #b87d1a; --dot: #b57a12; }
.red.shade { --body: #b92729; --edge: #8b1718; --dot: #870d0e; }
.amber.shade { --body: #b48228; --edge: #8e6315; --dot: #87600f; }
.violet.shade { --body: #a0207a; --edge: #9c187c; --dot: #7f0f62; }
.pin-body { fill: var(--body); stroke: var(--edge); stroke-width: 3; }
.pin-dot { fill: var(--dot); }
.google { font-family: Lato, sans-serif; font-weight: 700; paint-order: stroke; stroke: #fff; stroke-width: 9px; stroke-linejoin: round; }
.google-dim { stroke: #b4bac6; }
.risk { font-weight: 700; fill: #050505; }
.note { fill: #8b8b8b; }
.g { font-weight: 700; }
```
